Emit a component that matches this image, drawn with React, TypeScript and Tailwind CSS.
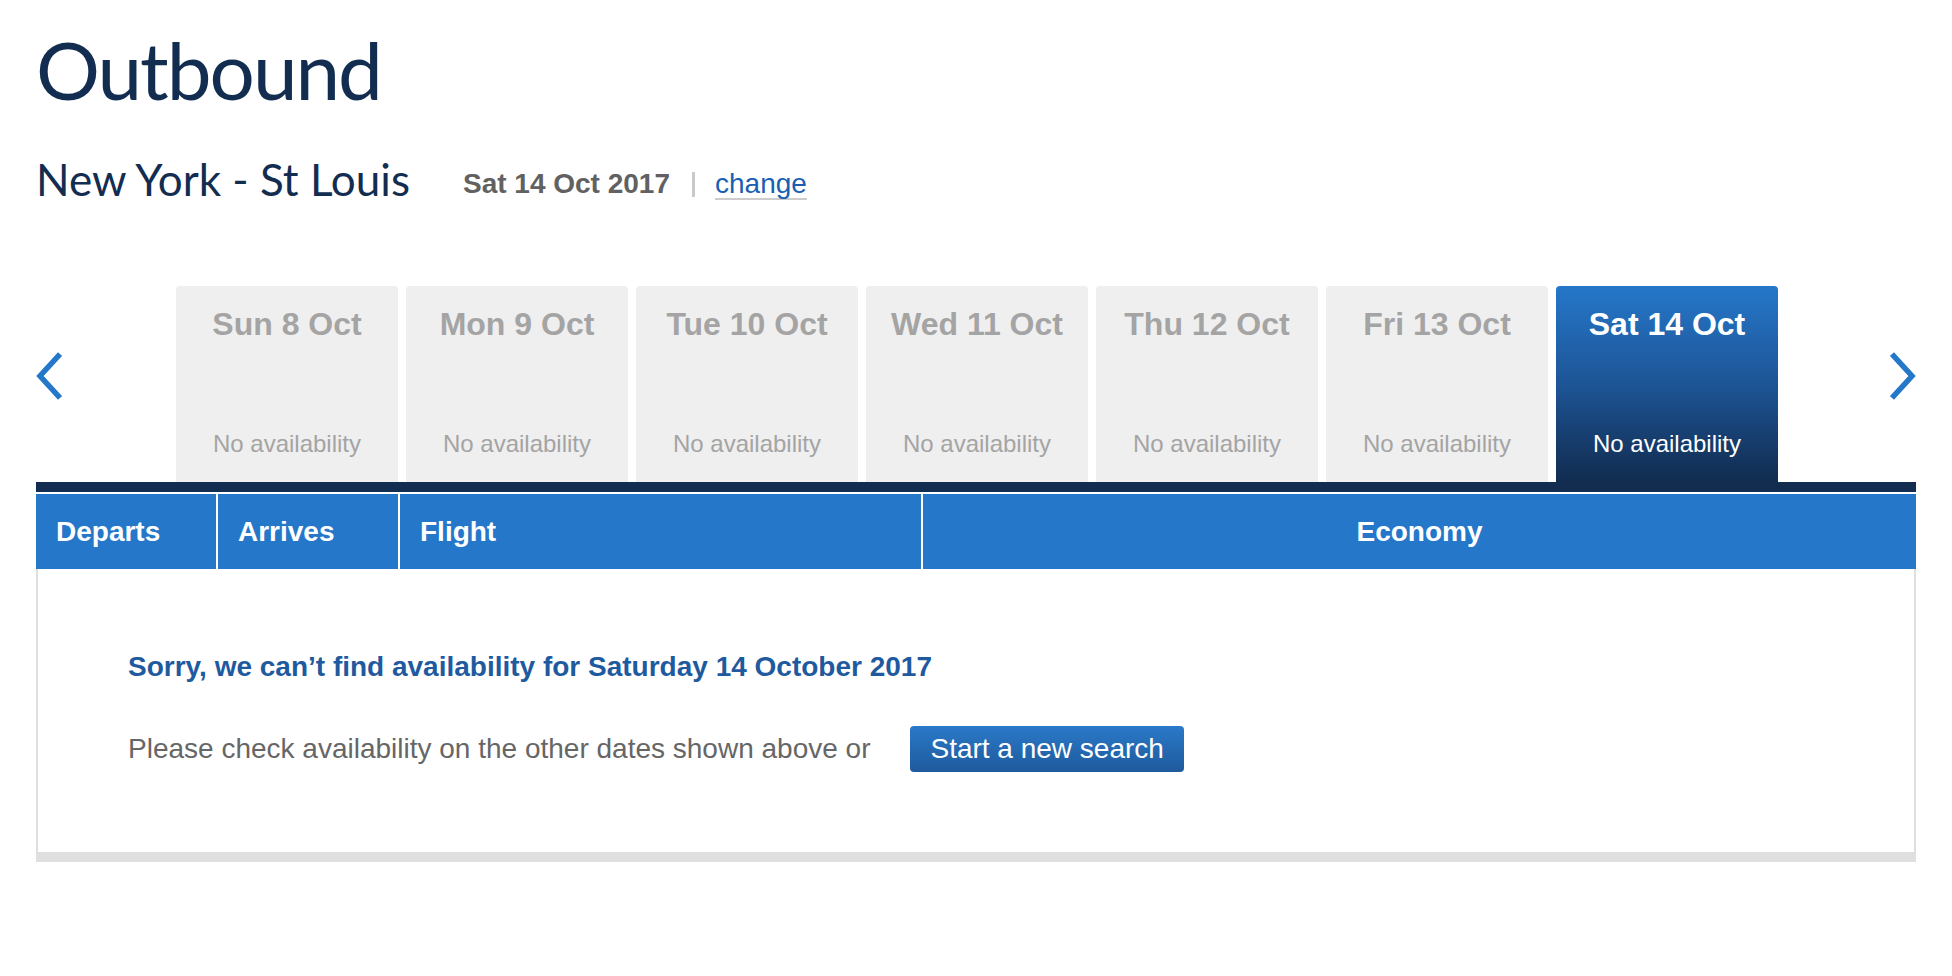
import React from 'react'

const days = [
  { label: 'Sun 8 Oct', active: false },
  { label: 'Mon 9 Oct', active: false },
  { label: 'Tue 10 Oct', active: false },
  { label: 'Wed 11 Oct', active: false },
  { label: 'Thu 12 Oct', active: false },
  { label: 'Fri 13 Oct', active: false },
  { label: 'Sat 14 Oct', active: true },
]

function Chevron({ dir }: { dir: 'left' | 'right' }) {
  const pts = dir === 'left' ? '24,2 4,24 24,46' : '2,2 22,24 2,46'
  return (
    <svg width="26" height="48" viewBox="0 0 26 48" fill="none" className="-translate-y-[8px]">
      <polyline points={pts} stroke="#2577c9" strokeWidth="5.5" strokeLinejoin="miter" />
    </svg>
  )
}

export default function App() {
  return (
    <div className="min-h-screen bg-white font-['Liberation_Sans',Arial,sans-serif] px-[36px] pb-10">
      {/* Title */}
      <h1 className="pt-[29px] text-[80px] leading-[80px] text-[#132d51] font-['Lato',sans-serif] font-normal tracking-[-0.025em]">
        Outbound
      </h1>

      <div className="mt-[48px] flex items-baseline">
        <span className="text-[44px] leading-[44px] text-[#132d51] font-['Lato',sans-serif]">New York - St Louis</span>
        <span className="ml-[53px] text-[28px] font-bold text-[#616161] -translate-y-[3px]">Sat 14 Oct 2017</span>
        <span className="ml-[22px] inline-block w-[3px] h-[25px] bg-[#cacaca] translate-y-[1px]" />
        <span className="ml-[20px] text-[28px] text-[#1a5fb4] border-b-2 border-[#cccccc] leading-none -translate-y-[3px]">change</span>
      </div>

      {/* Date strip */}
      <div className="mt-[78px] flex items-stretch">
        <div className="w-[140px] flex items-center">
          <Chevron dir="left" />
        </div>
        <div className="flex gap-[8px]">
          {days.map((d) => (
            <div
              key={d.label}
              className={
                d.active
                  ? 'w-[222px] h-[196px] rounded-t-[4px] bg-gradient-to-b from-[#2577c9] via-[#1d5596] to-[#112c50] flex flex-col items-center justify-between pt-[22px] pb-[26px] text-white'
                  : 'w-[222px] h-[196px] rounded-t-[4px] bg-[#efefef] flex flex-col items-center justify-between pt-[22px] pb-[26px] text-[#a4a4a4]'
              }
            >
              <div className="text-[32px] leading-none font-bold">{d.label}</div>
              <div className="text-[24px] leading-none">No availability</div>
            </div>
          ))}
        </div>
        <div className="flex-1 flex items-center justify-end">
          <Chevron dir="right" />
        </div>
      </div>

      {/* Table */}
      <div className="h-[10px] bg-[#122d50]" />
      <div className="mt-[2px] flex gap-[2px] h-[75px] text-white text-[28px] font-bold">
        <div className="w-[180px] bg-[#2577c9] flex items-center pl-[20px] leading-none">Departs</div>
        <div className="w-[180px] bg-[#2577c9] flex items-center pl-[20px] leading-none">Arrives</div>
        <div className="w-[521px] bg-[#2577c9] flex items-center pl-[20px] leading-none">Flight</div>
        <div className="flex-1 bg-[#2577c9] flex items-center justify-center leading-none">Economy</div>
      </div>

      <div className="border-x-2 border-[#dedede] pt-[84px] pb-[80px] pl-[90px]">
        <p className="text-[28px] leading-none font-bold text-[#1f5a9f]">
          Sorry, we can’t find availability for Saturday 14 October 2017
        </p>
        <div className="mt-[45px] flex items-center gap-[40px]">
          <span className="text-[28px] leading-none text-[#666666]">
            Please check availability on the other dates shown above or
          </span>
          <button className="h-[46px] px-[20px] rounded-[4px] bg-gradient-to-b from-[#2a79c9] to-[#1f5a9c] text-white text-[28px] leading-none">
            Start a new search
          </button>
        </div>
      </div>
      <div className="h-[10px] bg-[#dfdfdf]" />
    </div>
  )
}
